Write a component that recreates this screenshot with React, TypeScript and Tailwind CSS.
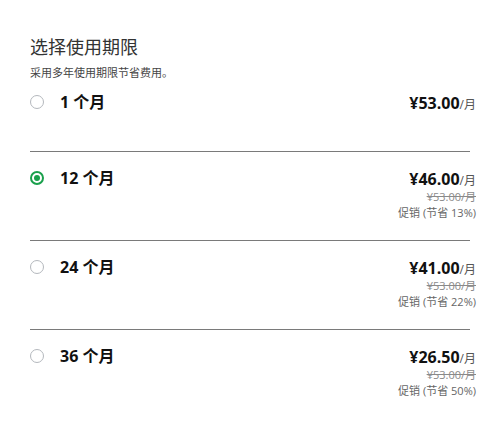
import React from "react";

type Plan = {
  months: number;
  price: string;
  save?: number;
};

const plans: Plan[] = [
  { months: 1, price: "53.00" },
  { months: 12, price: "46.00", save: 13 },
  { months: 24, price: "41.00", save: 22 },
  { months: 36, price: "26.50", save: 50 },
];

const Radio = ({ checked }: { checked: boolean }) =>
  checked ? (
    <span className="flex h-[14px] w-[14px] items-center justify-center rounded-full border-[2px] border-[#1aa04c]">
      <span className="h-[6px] w-[6px] rounded-full bg-[#1aa04c]" />
    </span>
  ) : (
    <span className="h-[14px] w-[14px] rounded-full border-[1.5px] border-[#b4b8bd]" />
  );

export default function App() {
  const selected = 12;
  return (
    <div
      className="h-[427px] w-[500px] bg-white pl-[30px] pt-[36px] text-[#222]"
      style={{ fontFamily: '"Open Sans", "Noto Sans CJK SC", sans-serif' }}
    >
      <h1 className="text-[18px] leading-[22px] text-[#333]">选择使用期限</h1>
      <p className="mt-[8px] text-[11px] leading-[14px] text-[#444]">采用多年使用期限节省费用。</p>

      <div className="mt-[5px] w-[446px]">
        {plans.map((p, i) => (
          <div key={p.months}>
            {i > 0 && <div className="h-px w-[440px] bg-[#7a7a7a]" />}
            <div className={`flex items-start ${i === 0 ? "h-[66px] pt-[6px]" : "h-[88px] pt-[15px]"}`}>
              <div className="flex h-[22px] items-center">
                <Radio checked={p.months === selected} />
              </div>
              <div className="ml-[16px] flex h-[22px] items-center text-[16px] font-bold text-[#111]">
                {p.months} 个月
              </div>
              <div className="ml-auto flex flex-col items-end">
                <div className="flex h-[22px] items-baseline">
                  <span className="text-[16px] font-bold text-[#111]">¥{p.price}</span>
                  <span className="text-[12px] text-[#555]">/月</span>
                </div>
                {p.save !== undefined && (
                  <>
                    <div className="h-[16px] text-[11px] leading-[16px] text-[#8a8a8a] line-through">¥53.00/月</div>
                    <div className="h-[16px] text-[11px] leading-[16px] text-[#666]">促销 (节省 {p.save}%)</div>
                  </>
                )}
              </div>
            </div>
          </div>
        ))}
      </div>
    </div>
  );
}
